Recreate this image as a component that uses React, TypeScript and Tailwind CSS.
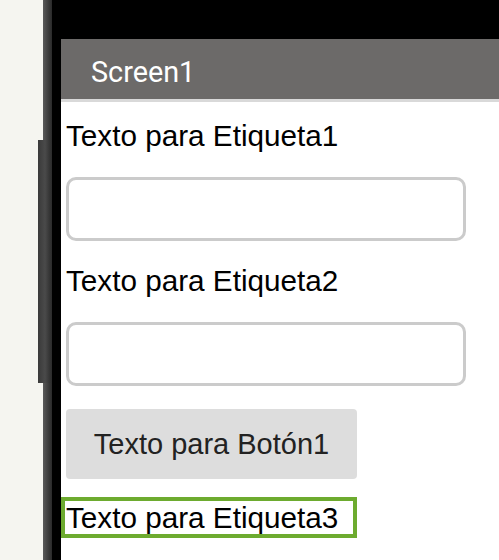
import React from "react";

const labelCls =
  "text-[29.7px] leading-[32px] text-black font-['Liberation_Sans',Arial,sans-serif]";

function TextBox() {
  return (
    <div className="ml-[5px] w-[400px] h-[64px] rounded-[10px] border-[3px] border-[#cbcbcb] bg-white" />
  );
}

export default function App() {
  return (
    <div className="w-[499px] h-[560px] flex bg-[#f5f5f0] overflow-hidden">
      {/* desk */}
      <div className="w-[38px] shrink-0" />

      {/* phone edge with side button */}
      <div className="w-[14px] shrink-0 flex flex-col">
        <div className="h-[140px] flex">
          <div className="w-[5px] bg-[#f5f5f0]" />
          <div className="flex-1 bg-gradient-to-r from-[#5a5a5a] to-[#2a2a2a]" />
        </div>
        <div className="h-[243px] bg-gradient-to-r from-[#3a3a3a] via-[#4a4a4a] to-[#2a2a2a]" />
        <div className="flex-1 flex">
          <div className="w-[5px] bg-[#f5f5f0]" />
          <div className="flex-1 bg-gradient-to-r from-[#5a5a5a] to-[#2a2a2a]" />
        </div>
      </div>
      <div className="w-[9px] shrink-0 bg-black" />

      {/* screen */}
      <div className="flex-1 flex flex-col">
        <div className="h-[39px] -ml-[9px] bg-black" />
        <div className="h-[60px] bg-[#6c6a69] pl-[30px] pt-[17px]">
          <span className="block text-[28.8px] leading-[33px] text-white font-['Roboto',sans-serif]">
            Screen1
          </span>
        </div>
        <div className="h-[3px] bg-[#d9d9d9]" />

        <div className="flex-1 bg-white flex flex-col items-start pt-[18px]">
          <p className={`${labelCls} ml-[5px]`}>Texto para Etiqueta1</p>
          <div className="h-[25px]" />
          <TextBox />
          <div className="h-[24px]" />
          <p className={`${labelCls} ml-[5px]`}>Texto para Etiqueta2</p>
          <div className="h-[25px]" />
          <TextBox />
          <div className="h-[23px]" />
          <button className="ml-[5px] w-[291px] h-[70px] rounded-[4px] bg-[#dddddd] text-[29px] leading-[32px] text-[#222] font-['Liberation_Sans',Arial,sans-serif]">
            Texto para Botón1
          </button>
          <div className="mt-[18px] w-[296px] h-[41px] border-4 border-[#6dab2f] pl-[1px]">
            <p className="text-[29.7px] leading-[33px] text-black font-['Liberation_Sans',Arial,sans-serif] whitespace-nowrap">
              Texto para Etiqueta3
            </p>
          </div>
        </div>
      </div>
    </div>
  );
}
